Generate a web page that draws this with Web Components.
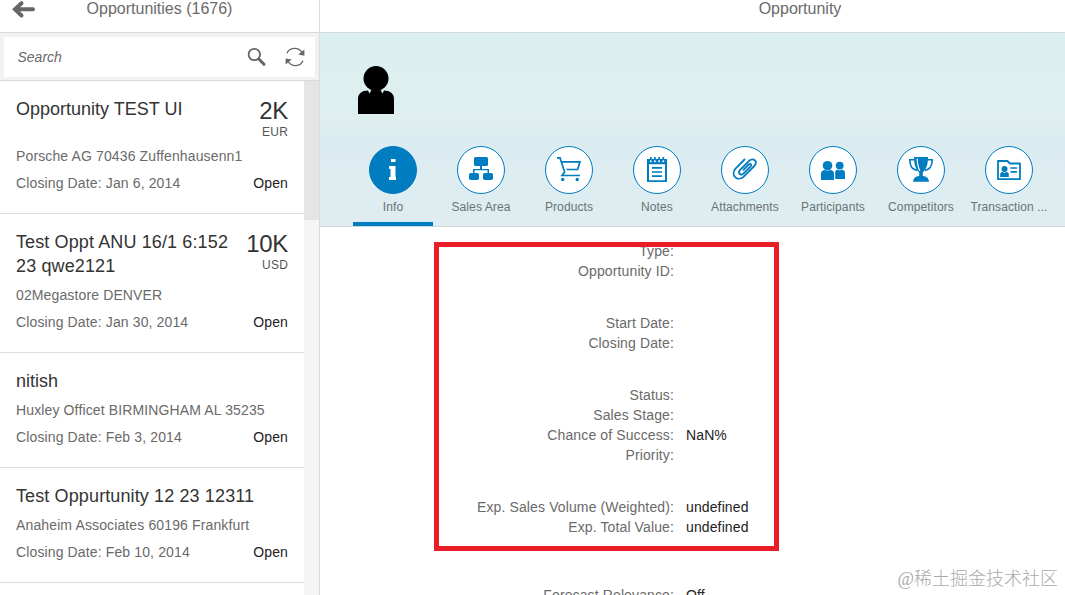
<!DOCTYPE html>
<html lang="en">
<head>
<meta charset="utf-8">
<title>Opportunities</title>
<style>
html,body{margin:0;height:100%;overflow:hidden;background:#fff;font-family:"Liberation Sans",Arial,sans-serif;color:#6a6a6a}
</style>
</head>
<body>
<opp-app></opp-app>
<script>
const define=(name,html,setup)=>customElements.define(name,class extends HTMLElement{
  constructor(){super();this.attachShadow({mode:'open'});}
  connectedCallback(){if(this.shadowRoot.childNodes.length)return;this.shadowRoot.innerHTML=html;if(setup)setup(this,this.shadowRoot);}
});

const icons={
info:'<path fill="#fff" d="M22 13h4.500v3H22zM20 20h6.500v11H27v3h-7v-3h1.500v-8H20z"/>',
area:'<g fill="#007cc0"><rect x="17" y="11" width="14" height="9" rx="1.5"/><rect x="12" y="27" width="10" height="7" rx="1.8"/><rect x="26" y="27" width="10" height="7" rx="1.8"/><path d="M23 20h2v3h7v4h-1.5v-2.7h-13V27H16v-4h7z"/></g>',
cart:'<g fill="none" stroke="#007cc0" stroke-width="1.7"><path d="M12 11.8h3l4.600 14.200L17 29.500h18"/><path d="M17 15.8h18l-2.4 7.7H21.5"/></g><circle cx="17.700" cy="33.500" r="1.700" fill="#007cc0"/><circle cx="32.200" cy="33.500" r="1.700" fill="#007cc0"/>',
notes:'<path fill="#007cc0" fill-rule="evenodd" d="M14 13h20v23H14zM16 18.2v16h16v-16z"/><path fill="#007cc0" d="M17 11h1.7v3H17zM21 11h1.7v3H21zM25.3 11H27v3h-1.7zM29.5 11h1.7v3h-1.7z"/><g fill="#fff"><circle cx="17.8" cy="15.2" r="1"/><circle cx="21.9" cy="15.2" r="1"/><circle cx="26.1" cy="15.2" r="1"/><circle cx="30.3" cy="15.2" r="1"/></g><path stroke="#007cc0" stroke-width="1.7" d="M19 21.8h10M19 26h10M19 30.2h10"/>',
clip:'<path fill="none" stroke="#007cc0" stroke-width="1.8" stroke-linecap="round" stroke-linejoin="round" d="M23.5 13.5l-9 9.2c-5.5 6 2 13.5 8 8.2L33.3 20c4.4-5-1.3-8.5-5.2-5.2L19 24c-2.8 3.3 1 6 3.5 3.7l6.8-7c2.3-2.7-.3-3.4-1.8-2l-5 5.2"/>',
people:'<g fill="#007cc0"><circle cx="18.5" cy="19.7" r="4.8"/><path d="M12 34v-6c0-2.8 1.7-4 4.2-4l2.3 1 2.3-1c2.7 0 4.2 1.2 4.2 4v6z"/><circle cx="30.7" cy="19.6" r="3.9"/><path d="M26.2 33v-7.4c.5-1.3 1.4-1.8 2.8-1.8l1.7.8 1.8-.8c2.5 0 3.5 1.3 3.5 3.6V33z"/></g>',
cup:'<path fill="#007cc0" d="M17 11h14c0 8-1.700 12-5.200 15.300V30c4 .4 6 2.500 6.200 5.800H16c.200-3.300 2.200-5.400 6.200-5.800v-3.700C18.7 23 17 19 17 11z"/><path stroke="#007cc0" stroke-width="1.6" fill="none" d="M17.3 13.8h-4.5c0 6 2.7 10 7.4 10.6M30.7 13.8h4.5c0 6-2.7 10-7.4 10.6"/><path stroke="#fff" stroke-width="1.2" fill="none" d="M20.2 12.5c.1 5.6 1 9.3 2.7 12.3"/>',
card:'<path fill="none" stroke="#007cc0" stroke-width="1.8" stroke-linejoin="round" d="M13 33.2V15h9.4l2.5 2.5H35v15.7z"/><circle cx="19.5" cy="22.9" r="3" fill="#007cc0"/><path fill="#007cc0" d="M15.2 31v-2.7c0-1.6 1-2.4 2.7-2.4l1.6 1 1.6-1c1.7 0 2.7.8 2.7 2.4V31z"/><path stroke="#007cc0" stroke-width="1.7" d="M25.5 22H32M25.5 25.9H32"/>'
};

define('page-bar',`<style>
:host{display:grid;grid-template-columns:1fr auto 1fr;height:32px;border-bottom:1px solid #d2dadb;font-size:16px;line-height:17px;background:#fff;flex:none}
.t{white-space:nowrap}</style>
<div><slot name="nav"></slot></div><div class="t"><slot></slot></div><div></div>`);

define('back-arrow',`<style>:host{display:block;height:20px;padding-left:12px}svg{display:block}</style>
<svg width="24" height="20"><path d="M9.500 3.200L3 9.300l6.500 6.200M4 9.300h17" fill="none" stroke="#666" stroke-width="4" stroke-linecap="round" stroke-linejoin="miter"/></svg>`);

define('search-field',`<style>
:host{display:block;box-sizing:border-box;height:48px;padding:4px 4px 3px;background:#f2f2f2;border-bottom:1px solid #d9d9d9;flex:none}
.f{display:flex;align-items:center;height:40px;background:#fff;padding:0 10px 0 13.5px;font-size:14px;font-style:italic}
span{flex:1}svg{display:block}</style>
<div class="f"><span>Search</span>
<svg width="20" height="20" style="margin-right:18px"><circle cx="7.3" cy="7.500" r="5.700" fill="none" stroke="#666" stroke-width="1.8"/><path d="M12 12.300l5 5" stroke="#666" stroke-width="3" stroke-linecap="round"/></svg>
<svg width="20" height="20"><g fill="none" stroke="#666" stroke-width="1.3"><path d="M2 6.300C4.500.300 13-.3 17 5.300"/><path d="M18 13.700C15.500 19.700 7 20.300 3 14.700"/></g><path fill="#666" d="M19.400 2.500v6.200l-6.100-1.100zM.600 17.600v-6.200l6.100 1.100z"/></svg></div>`);

define('opp-item',`<style>
:host{display:block;padding:16px 16px 16px;border-bottom:1px solid #ddd;background:#fff;font-size:14px;letter-spacing:.13px;color:#6a6a6a}
.top{display:flex;justify-content:space-between;align-items:flex-start;margin-bottom:4px}
.t{font-size:18px;line-height:24px;letter-spacing:var(--title-spacing,0);color:#333;white-space:pre-line}
.n{text-align:right;letter-spacing:0;color:#333}
.n b{display:block;font-weight:400;font-size:24px;line-height:28px;letter-spacing:-.3px}
.n i{display:block;font-style:normal;font-size:12px;line-height:14px;color:#555;letter-spacing:.2px}
.r{display:flex;justify-content:space-between;line-height:27px;white-space:nowrap}
.s{color:#222}</style>
<div class="top"><div class="t"><slot></slot></div><div class="n"></div></div>
<div class="r"><slot name="account"></slot></div>
<div class="r"><slot name="date"></slot><span class="s">Open</span></div>`,(el,r)=>{
  const a=el.getAttribute('amount');
  if(a)r.querySelector('.n').innerHTML='<b>'+a+'</b><i>'+el.getAttribute('unit')+'</i>';
});

define('master-list',`<style>
:host{display:flex;flex:1;min-height:0;overflow:hidden}
.wide{--title-spacing:.12px}
.l{flex:1}.bar{width:15px;background:#f5f5f5}.thumb{height:139px;background:#e5e5e5}</style>
<div class="l">
<opp-item amount="2K" unit="EUR">Opportunity TEST UI<span slot="account">Porsche AG 70436 Zuffenhausenn1</span><span slot="date">Closing Date: Jan 6, 2014</span></opp-item>
<opp-item class="wide" amount="10K" unit="USD">Test Oppt ANU 16/1 6:152<br>23 qwe2121<span slot="account">02Megastore DENVER</span><span slot="date">Closing Date: Jan 30, 2014</span></opp-item>
<opp-item>nitish<span slot="account">Huxley Officet BIRMINGHAM AL 35235</span><span slot="date">Closing Date: Feb 3, 2014</span></opp-item>
<opp-item class="wide">Test Oppurtunity 12 23 12311<span slot="account">Anaheim Associates 60196 Frankfurt</span><span slot="date">Closing Date: Feb 10, 2014</span></opp-item>
</div><div class="bar"><div class="thumb"></div></div>`);

define('icon-tab',`<style>
:host{display:flex;flex-direction:column;align-items:center;box-sizing:border-box;width:80px;height:80px;margin-right:8px;border-bottom:4px solid transparent;font-size:12px;letter-spacing:.1px;white-space:nowrap;color:#687376}
:host([selected]){border-bottom-color:#007cc0}
svg{display:block;flex:none;margin-bottom:6px}
.d{fill:#fff;stroke:#007cc0}:host([selected]) .d{fill:#007cc0}
.x{line-height:14px}</style>
<svg width="48" height="48"><circle class="d" cx="24" cy="24" r="23.5"/><g></g></svg><div class="x"><slot></slot></div>`,(el,r)=>{
  r.querySelector('g').innerHTML=icons[el.getAttribute('icon')];
});

define('object-header',`<style>
:host{display:flex;flex-direction:column;box-sizing:border-box;height:194px;padding:33px 0 0 33px;background:linear-gradient(#dbefee,#dfeff0 45%,#dbecf0 55%,#dfedf0);border-bottom:1px solid #ccdadb;flex:none}
.p{display:block;margin:0 0 32px 5px}
nav{display:flex}</style>
<svg class="p" width="36" height="48"><circle cx="18" cy="12.500" r="12.500"/><path d="M0 48V33c0-5.500 4-8.500 10-8.500l1.500 3 2-3.500h9l2 3.500 1.500-3c6 0 10 3 10 8.500v15z"/></svg>
<nav><icon-tab selected icon="info">Info</icon-tab><icon-tab icon="area">Sales Area</icon-tab><icon-tab icon="cart">Products</icon-tab><icon-tab icon="notes">Notes</icon-tab><icon-tab icon="clip">Attachments</icon-tab><icon-tab icon="people">Participants</icon-tab><icon-tab icon="cup">Competitors</icon-tab><icon-tab icon="card">Transaction ...</icon-tab></nav>`);

define('form-row',`<style>
:host{display:grid;grid-template-columns:354px 1fr;column-gap:12px;font-size:14px;line-height:20px;letter-spacing:.12px;white-space:nowrap}
.l{text-align:right}.v{color:#222}</style>
<div class="l"><slot></slot></div><div class="v"></div>`,(el,r)=>{r.querySelector('.v').textContent=el.getAttribute('value')||'';});

define('detail-form',`<style>
:host{display:flex;flex-direction:column;gap:32px;flex:1;min-height:0;padding-top:14px}
.next{margin-top:16px}
</style>
<div><form-row>Type:</form-row><form-row>Opportunity ID:</form-row></div>
<div><form-row>Start Date:</form-row><form-row>Closing Date:</form-row></div>
<div><form-row>Status:</form-row><form-row>Sales Stage:</form-row><form-row value="NaN%">Chance of Success:</form-row><form-row>Priority:</form-row></div>
<div><form-row value="undefined">Exp. Sales Volume (Weighted):</form-row><form-row value="undefined">Exp. Total Value:</form-row></div>
<div class="next"><form-row value="Off">Forecast Relevance:</form-row></div>`);

define('mark-box',`<style>:host{display:block;position:absolute;box-sizing:border-box;left:434px;top:242px;width:345px;height:309px;border:5px solid #e91e26}</style>`);
define('water-mark',`<style>:host{display:block;position:absolute;right:7px;bottom:3px;font:300 18px/26px "Liberation Serif","Noto Sans CJK SC",serif;color:#aaa;white-space:nowrap}</style><slot></slot>`);

define('opp-app',`<style>
:host{display:grid;grid-template-columns:319px 1fr;position:relative;height:100vh;overflow:hidden}
aside,main{display:flex;flex-direction:column;min-width:0;min-height:0;overflow:hidden}
main{border-left:1px solid #d9dcdc}
.h{padding-left:215px}</style>
<aside><page-bar><back-arrow slot="nav"></back-arrow>Opportunities (1676)</page-bar><search-field></search-field><master-list></master-list></aside>
<main><page-bar><span class="h">Opportunity</span></page-bar><object-header></object-header><detail-form></detail-form></main>
<mark-box></mark-box><water-mark>@稀土掘金技术社区</water-mark>`);
</script>
</body>
</html>
